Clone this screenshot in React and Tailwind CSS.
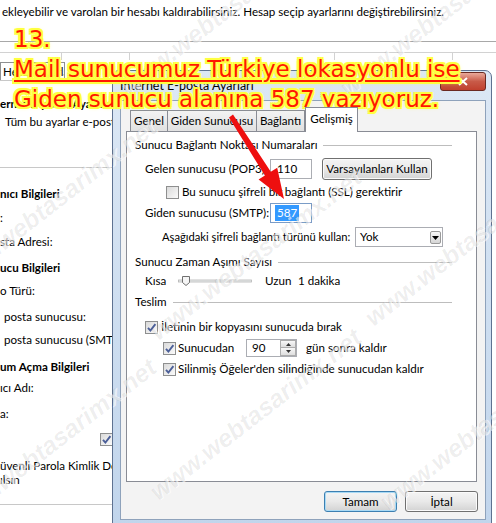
import React from 'react';

function Check({ checked = false }) {
  return (
    <span className="relative flex h-[13px] w-[13px] shrink-0 items-center justify-center border border-[#8e8f8f] bg-white">
      <span className="h-[11px] w-[11px] bg-linear-to-br from-[#dadada] to-[#fbfbfb]" />
      {checked && (
        <svg className="absolute left-[0px] top-[0px]" width="11" height="11" viewBox="0 0 11 11">
          <path d="M2 5.8 L4.4 8.6 L9.4 2.2" fill="none" stroke="#4b5f98" strokeWidth="1.9" />
        </svg>
      )}
    </span>
  );
}

function Group({ title, className = '' }) {
  return (
    <div className={`flex h-[20px] items-center pl-[8px] pr-[24px] ${className}`}>
      <span className="whitespace-nowrap">{title}</span>
      <span className="ml-[6px] h-px flex-1 bg-[#bdbdbd]" />
    </div>
  );
}

function WinButton({ children, primary = false, className = '' }) {
  return (
    <div
      className={`flex items-center justify-center rounded-[3px] border bg-linear-to-b from-[#f4f4f4] via-[#e9e9e9] to-[#d3d3d3] ${
        primary ? 'border-[#3c7fb1] shadow-[inset_0_0_0_1px_#a9daf5]' : 'border-[#707070] shadow-[inset_0_0_0_1px_#fbfbfb]'
      } ${className}`}
    >
      {children}
    </div>
  );
}

function Watermark({ className }) {
  return (
    <span
      className={`pointer-events-none absolute -rotate-[38deg] whitespace-nowrap font-['Liberation_Sans',sans-serif] text-[25px] font-bold italic text-[#00000012] [text-shadow:1px_1px_0_rgba(255,255,255,0.6)] ${className}`}
    >
      www.webtasarimx.net
    </span>
  );
}

export default function App() {
  return (
    <div className="relative h-[523px] w-[496px] overflow-hidden bg-white font-['Lato',sans-serif] text-[11.6px] leading-[16px] text-black">
      {/* background window */}
      <div className="h-[42px] whitespace-nowrap border-b border-[#a8a8a8] pl-[2px] pt-[4px]">
        ekleyebilir ve varolan bir hesabı kaldırabilirsiniz. Hesap seçip ayarlarını değiştirebilirsiniz.
      </div>
      <div className="mt-[10px] flex h-[8px]">
        <span className="w-[62px] border-r border-t border-[#d2d2d2]" />
        <span className="w-[68px] border-r border-t border-[#d2d2d2]" />
        <span className="w-[205px] border-r border-t border-[#d2d2d2]" />
        <span className="w-[118px] border-r border-t border-[#d2d2d2]" />
        <span className="flex-1 border-t border-[#d2d2d2]" />
      </div>
      <div className="mt-[2px] flex h-[18px] w-[65px] items-center overflow-hidden whitespace-nowrap border border-b-0 border-[#8e9092] pl-[2px]">
        Hesap Ayarları
      </div>
      <div className="w-[113px] overflow-hidden whitespace-nowrap border-t border-[#c8c8c8]">
        <div className="h-[72px] border-b border-[#c8c8c8]">
          <div className="mt-[15px] font-bold">ernet E-posta Ayarları</div>
          <div className="mt-[2px] pl-[5px]">Tüm bu ayarlar e-posta hesabınızın</div>
        </div>
        <div className="mt-[18px] font-bold">nıcı Bilgileri</div>
        <div className="mt-[8px]">:</div>
        <div className="mt-[8px]">sta Adresi:</div>
        <div className="mt-[10px] font-bold">ucu Bilgileri</div>
        <div className="mt-[7px]">o Türü:</div>
        <div className="mt-[10px] pl-[4px]">posta sunucusu:</div>
        <div className="mt-[7px] pl-[4px]">posta sunucusu (SMTP):</div>
        <div className="mt-[11px] font-bold">um Açma Bilgileri</div>
        <div className="mt-[5px]">ıcı Adı:</div>
        <div className="mt-[10px]">a:</div>
        <div className="mt-[11px] flex justify-end pr-[0px]">
          <Check checked />
        </div>
        <div className="mt-[13px] h-[46px] border-b border-[#c8c8c8] leading-[14px]">
          <div>üvenli Parola Kimlik Doğrulaması</div>
          <div>ılsın</div>
        </div>
      </div>

      {/* front dialog */}
      <div className="absolute left-[112px] top-[70px] h-[460px] w-[380px] rounded-t-[7px] border border-[#5e7291] bg-linear-to-b from-[#dce8f5] to-[#c1d5ec]">
        <div className="relative flex h-[29px] items-center pl-[7px] text-[12.5px]">
          Internet E-posta Ayarları
          <div className="absolute right-[5px] top-[1px] flex h-[19px] w-[46px] items-center justify-center rounded-[3px] border border-[#6b2a22] bg-linear-to-b from-[#e9a99a] via-[#c85a48] to-[#c0402e]">
            <svg width="10" height="9" viewBox="0 0 10 9">
              <path d="M1 1 L9 8 M9 1 L1 8" stroke="#fff" strokeWidth="2" />
            </svg>
          </div>
        </div>
        <div className="ml-[7px] mr-[5px] h-[420px] border border-[#8ea2bb] bg-[#f3f3f3]">
          {/* tabs */}
          <div className="mt-[6px] flex h-[24px] items-end pl-[9px]">
            <div className="flex h-[21px] w-[38px] items-center justify-center border border-b-0 border-[#898c95] bg-linear-to-b from-[#f3f3f3] to-[#e1e1e1]">
              Genel
            </div>
            <div className="flex h-[21px] w-[89px] items-center justify-center border border-b-0 border-l-0 border-[#898c95] bg-linear-to-b from-[#f3f3f3] to-[#e1e1e1]">
              Giden Sunucusu
            </div>
            <div className="flex h-[21px] w-[48px] items-center justify-center border border-b-0 border-l-0 border-[#898c95] bg-linear-to-b from-[#f3f3f3] to-[#e1e1e1]">
              Bağlantı
            </div>
            <div className="relative z-10 -mb-[1px] flex h-[25px] w-[53px] items-center justify-center border border-b-0 border-[#898c95] bg-white pb-[3px]">
              Gelişmiş
            </div>
          </div>

          {/* panel */}
          <div className="ml-[5px] h-[351px] w-[351px] border border-[#898c95] bg-white">
            <Group title="Sunucu Bağlantı Noktası Numaraları" className="mt-[3px]" />
            <div className="mt-[3px] flex h-[22px] items-center pl-[18px]">
              <span className="w-[125px] whitespace-nowrap">Gelen sunucusu (POP3):</span>
              <span className="flex h-[20px] w-[42px] items-center border border-[#abadb3] bg-white pl-[6px]">110</span>
              <WinButton className="ml-[10px] h-[22px] w-[110px]">Varsayılanları Kullan</WinButton>
            </div>
            <div className="mt-[4px] flex h-[16px] items-center pl-[39px]">
              <Check />
              <span className="ml-[3px] whitespace-nowrap">Bu sunucu şifreli bir bağlantı (SSL) gerektirir</span>
            </div>
            <div className="mt-[3px] flex h-[20px] items-center pl-[18px]">
              <span className="w-[125px] whitespace-nowrap">Giden sunucusu (SMTP):</span>
              <span className="flex h-[20px] w-[42px] items-center border border-[#7a9cc7] bg-white pl-[4px]">
                <span className="bg-[#3399ff] px-[2px] text-white">587</span>
              </span>
            </div>
            <div className="mt-[4px] flex h-[20px] items-center pl-[35px]">
              <span className="w-[193px] whitespace-nowrap text-[11.2px]">Aşağıdaki şifreli bağlantı türünü kullan:</span>
              <span className="relative flex h-[20px] w-[88px] items-center border border-[#abadb3] bg-white pl-[4px]">
                Yok
                <span className="absolute right-[1px] top-[3px] flex h-[13px] w-[11px] items-center justify-center rounded-[2px] border border-[#9a9a9a] bg-linear-to-b from-[#f7f7f7] to-[#d6d6d6]">
                  <svg width="7" height="4" viewBox="0 0 7 4">
                    <path d="M0 0 H7 L3.5 4 Z" fill="#000" />
                  </svg>
                </span>
              </span>
            </div>
            <Group title="Sunucu Zaman Aşımı Sayısı" className="mt-[5px]" />
            <div className="mt-[1px] flex h-[16px] items-center pl-[18px]">
              <span className="w-[33px]">Kısa</span>
              <svg width="74" height="16" viewBox="0 0 74 16">
                <rect x="0.5" y="7" width="73" height="2" fill="#eceeef" stroke="#b4b4b4" strokeWidth="0.8" />
                <path d="M4.5 3.5 H11.5 V9.5 L8 12.5 L4.5 9.5 Z" fill="#f5f5f5" stroke="#707070" />
              </svg>
              <span className="ml-[13px] w-[33px]">Uzun</span>
              <span>1 dakika</span>
            </div>
            <Group title="Teslim" className="mt-[3px]" />
            <div className="mt-[7px] flex h-[16px] items-center pl-[18px]">
              <Check checked />
              <span className="ml-[3px] whitespace-nowrap">İletinin bir kopyasını sunucuda bırak</span>
            </div>
            <div className="mt-[4px] flex h-[18px] items-center pl-[36px]">
              <Check checked />
              <span className="ml-[2px] w-[68px]">Sunucudan</span>
              <span className="relative flex h-[18px] w-[51px] items-center border border-[#abadb3] bg-white pl-[5px]">
                90
                <span className="absolute right-[0px] top-[0px] flex h-[16px] w-[16px] flex-col">
                  <span className="flex h-[8px] items-center justify-center border border-[#acacac] bg-linear-to-b from-[#f8f8f8] to-[#dedede]">
                    <svg width="5" height="3" viewBox="0 0 5 3">
                      <path d="M0 3 H5 L2.5 0 Z" fill="#333" />
                    </svg>
                  </span>
                  <span className="flex h-[8px] items-center justify-center border border-t-0 border-[#acacac] bg-linear-to-b from-[#f8f8f8] to-[#dedede]">
                    <svg width="5" height="3" viewBox="0 0 5 3">
                      <path d="M0 0 H5 L2.5 3 Z" fill="#333" />
                    </svg>
                  </span>
                </span>
              </span>
              <span className="ml-[9px] whitespace-nowrap">gün sonra kaldır</span>
            </div>
            <div className="mt-[4px] flex h-[16px] items-center pl-[36px]">
              <Check checked />
              <span className="ml-[2px] whitespace-nowrap">Silinmiş Öğeler'den silindiğinde sunucudan kaldır</span>
            </div>
          </div>

          {/* buttons */}
          <div className="mt-[9px] flex justify-end gap-[8px] pr-[7px]">
            <WinButton primary className="h-[21px] w-[73px]">Tamam</WinButton>
            <WinButton className="h-[21px] w-[73px]">İptal</WinButton>
          </div>
        </div>
      </div>

      {/* watermarks */}
      <Watermark className="left-[95px] top-[2px]" />
      <Watermark className="left-[315px] top-[2px]" />
      <Watermark className="left-[-80px] top-[196px]" />
      <Watermark className="left-[125px] top-[246px]" />
      <Watermark className="left-[340px] top-[232px]" />
      <Watermark className="left-[-80px] top-[436px]" />
      <Watermark className="left-[125px] top-[406px]" />
      <Watermark className="left-[355px] top-[416px]" />

      {/* red arrow */}
      <svg className="pointer-events-none absolute left-0 top-0" width="496" height="523" viewBox="0 0 496 523">
        <polygon
          points="233,114.5 270.8,171.8 277.2,167.8 284,199 258.6,179.6 264.9,175.6 229,117.5"
          fill="#ee0f0f"
        />
      </svg>

      {/* annotation */}
      <div className="pointer-events-none absolute left-[14px] top-[24px] whitespace-nowrap font-['DejaVu_Sans',sans-serif] text-[23px] leading-[30px] text-[#ff1800] [text-shadow:2px_0_0_#ffff40,-2px_0_0_#ffff40,0_2px_0_#ffff40,0_-2px_0_#ffff40,2px_2px_0_#ffff40,-2px_-2px_0_#ffff40,2px_-2px_0_#ffff40,-2px_2px_0_#ffff40,0_0_4px_#ffff40]">
        <div>13.</div>
        <div className="underline decoration-2 underline-offset-[3px]">Mail sunucumuz Türkiye lokasyonlu ise</div>
        <div>Giden sunucu alanına 587 yazıyoruz.</div>
      </div>
    </div>
  );
}
